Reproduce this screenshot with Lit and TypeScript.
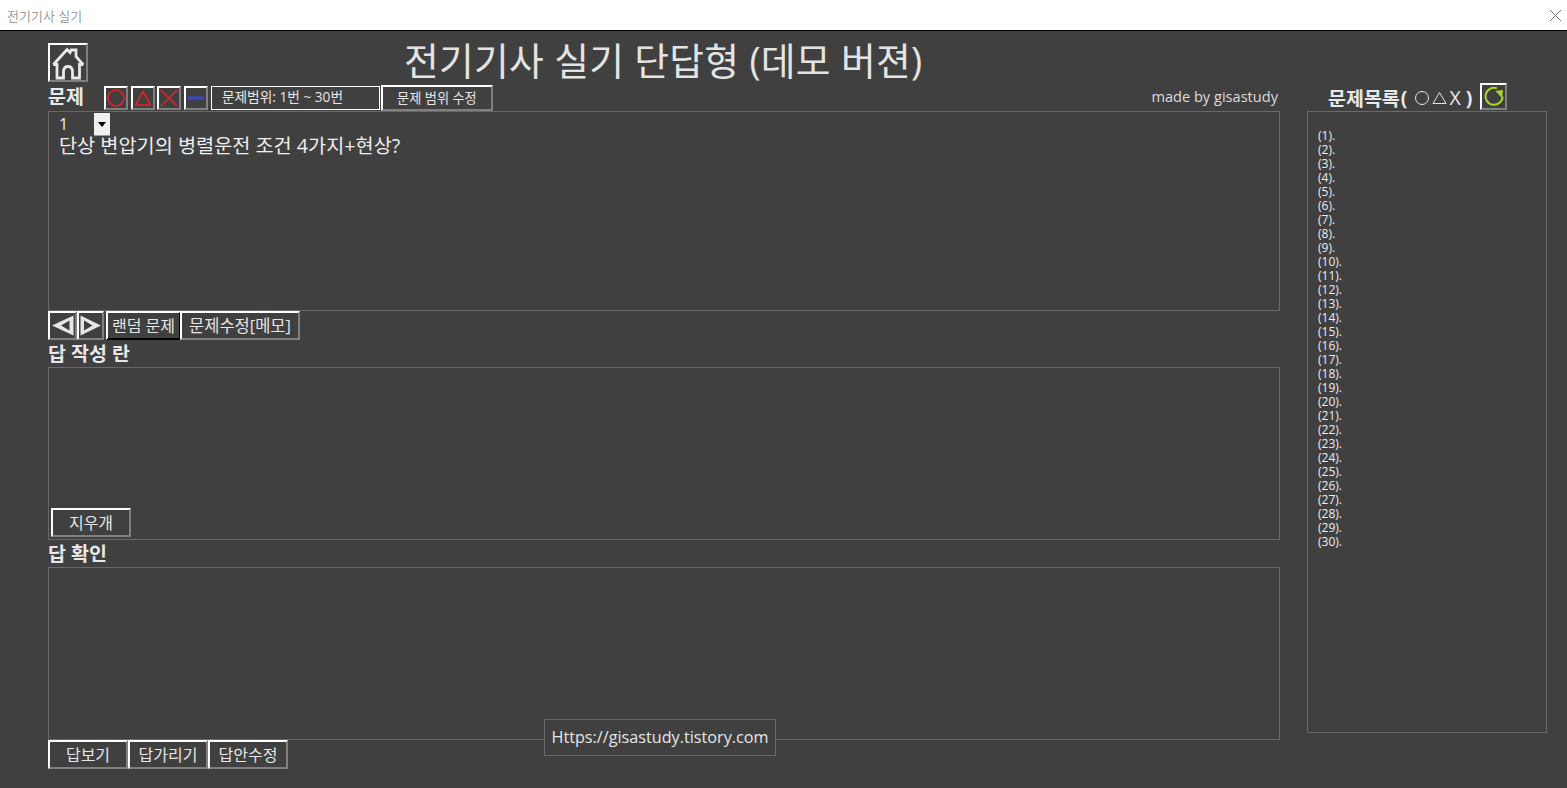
import { LitElement, html, css, svg } from "lit";
import { customElement } from "lit/decorators.js";

const rows = Array.from({ length: 30 }, (_, i) => i + 1);

@customElement("app-root")
export class AppRoot extends LitElement {
  static styles = css`
    :host {
      display: block;
      width: 1567px;
      height: 788px;
      overflow: hidden;
      position: relative;
      background: #404040;
      font-family: "Open Sans", "Noto Sans CJK KR", sans-serif;
      color: #eaeaea;
    }
    .titlebar {
      height: 30px;
      background: #fff;
      border-bottom: 1px solid #000;
      display: flex;
      align-items: center;
      justify-content: space-between;
      padding: 0 5px 0 7px;
      font-size: 13px;
      color: #a0a0a0;
    }
    .main {
      display: grid;
      grid-template-columns: 1232px 240px;
      grid-template-rows: 40px 28px 1fr;
      column-gap: 27px;
      padding: 12px 0 0 48px;
    }
    .top {
      grid-column: 1;
      grid-row: 1;
      display: flex;
      align-items: flex-start;
    }
    .title {
      font-size: 37.8px;
      line-height: 36px;
      margin: 0 0 0 316px;
      color: #e4e4e4;
      white-space: nowrap;
      letter-spacing: 0.25px;
    }
    .btn {
      box-sizing: border-box;
      display: flex;
      align-items: center;
      justify-content: center;
      flex: none;
      background: #404040;
      border: 2px solid;
      border-color: #fff #808080 #808080 #fff;
      white-space: nowrap;
      color: #e6e6e6;
      font-size: 16px;
      padding: 0 0 1px;
    }
    .home { width: 40px; height: 39px; padding: 0; }
    .left { grid-column: 1; grid-row: 2 / 4; }
    .head {
      height: 28px;
      display: flex;
      align-items: center;
    }
    .label {
      font-size: 19.5px;
      font-weight: 700;
      line-height: 26px;
      height: 26px;
      white-space: nowrap;
      color: #e8e8e8;
    }
    .syms { display: flex; gap: 3px; margin-left: 20px; margin-top: 2px; }
    .sym { width: 24px; height: 24px; padding: 0; }
    .sym.nudge { margin-left: -1px; }
    .range {
      box-sizing: border-box;
      width: 169px;
      height: 24px;
      margin: 2px 0 0 3px;
      border: 1px solid #fff;
      font-size: 13.7px;
      line-height: 20px;
      padding-left: 10px;
      color: #e6e6e6;
      white-space: nowrap;
    }
    .rangebtn { width: 112px; height: 26px; margin: 2px 0 0 1px; font-size: 13.2px; }
    .made {
      margin-left: auto;
      margin-right: 2px;
      font-size: 14.6px;
      color: #dcdcdc;
      margin-top: -3px;
      white-space: nowrap;
    }
    .box {
      box-sizing: border-box;
      border: 1px solid #696969;
      position: relative;
    }
    .q { height: 200px; padding: 1px 0 0 11px; }
    .sel { display: flex; height: 23px; }
    .sel span { width: 34px; font-size: 16px; line-height: 23px; color: #eee; margin-left: -1px; }
    .arrow {
      box-sizing: border-box;
      width: 16px;
      height: 23px;
      margin-left: 1px;
      background: #f0f0f0;
      border-bottom: 1px solid #999;
      display: flex;
      align-items: center;
      justify-content: center;
    }
    .qtext {
      font-size: 19.7px;
      line-height: 20px;
      color: #eee;
      white-space: nowrap;
      margin-left: -1px;
    }
    .tools { height: 30px; display: flex; }
    .nav { width: 29px; height: 29px; padding: 0; }
    .nav + .nav { margin-left: 0; margin-right: 2px; width: 27px; }
    .tbtn { height: 29px; font-size: 16px; }
    .tbtn.rand {
      width: 75px;
      border-color: #fff #000 #000 #fff;
    }
    .tbtn.edit { width: 120px; margin-left: -1px; font-size: 16.5px; }
    .subhead { height: 26px; display: flex; align-items: flex-end; }
    .a { height: 173px; display: flex; align-items: flex-end; padding: 0 0 2px 2px; }
    .erase { width: 80px; height: 29px; font-size: 16px; }
    .subhead.two { height: 27px; }
    .c { height: 173px; }
    .bottom { display: flex; height: 30px; }
    .bbtn { width: 80px; height: 29px; font-size: 16px; }
    .right { grid-column: 2; grid-row: 2 / 4; }
    .rhead { height: 28px; display: flex; align-items: center; padding-left: 21px; }
    .rtitle { width: 145px; display: flex; align-items: center; font-size: 19.5px; font-weight: 700; white-space: nowrap; color: #e8e8e8; margin-top: 1px; }
    .rtitle .thin { font-weight: 400; margin-left: 7px; display: flex; align-items: center; gap: 2px; }
    .rtitle .thin svg { display: block; margin-top: 1px; }
    .rtitle .p { margin-left: 1px; }
    .rtitle .p.end { margin-left: 5px; }
    .refresh { width: 27px; height: 27px; margin-left: 7px; margin-top: -1px; padding: 0; }
    .list {
      height: 622px;
      padding: 17px 0 0 10px;
      font-size: 12px;
      line-height: 14px;
      color: #eee;
    }
    .badge {
      position: absolute;
      left: 544px;
      top: 719px;
      box-sizing: border-box;
      width: 232px;
      height: 37px;
      border: 1px solid #696969;
      background: #404040;
      display: flex;
      align-items: center;
      justify-content: center;
      padding-bottom: 2px;
      font-size: 16.2px;
      color: #e6e6e6;
      white-space: nowrap;
    }
  `;

  private sym(shape: unknown, cls = "") {
    return html`<div class="btn sym ${cls}">
      <svg width="20" height="20" viewBox="0 0 20 20" fill="none" stroke-width="1.6">${shape}</svg>
    </div>`;
  }

  render() {
    return html`
      <div class="titlebar">
        <span>전기기사 실기</span>
        <svg width="13" height="13" viewBox="0 0 13 13" stroke="#777" stroke-width="1" fill="none">
          <path d="M1 1 L12 12 M12 1 L1 12" />
        </svg>
      </div>
      <div class="main">
        <div class="top">
          <div class="btn home">
            <svg width="34" height="34" viewBox="0 0 34 34" fill="none" stroke="#e8e8e8" stroke-width="2.8" stroke-linejoin="miter" stroke-miterlimit="2">
              <path d="M2.5 18.5 L16 3.5 L19 6.5 L20 4 L25 4 L25 10.5 L32 18.5 L28.5 18.5 L28.5 32 L21.5 32 L21.5 25 Q21 20.5 17 20.5 Q13 20.5 12.5 25 L12.5 32 L6 32 L6 18.5 Z" />
            </svg>
          </div>
          <div class="title">전기기사 실기 단답형 (데모 버젼)</div>
        </div>
        <div class="left">
          <div class="head">
            <div class="label">문제</div>
            <div class="syms">
              ${this.sym(svg`<circle cx="10" cy="10" r="8" stroke="#e0202c" />`)}
              ${this.sym(svg`<path d="M10 3.5 L17.5 17 L2.5 17 Z" stroke="#e0202c" />`)}
              ${this.sym(svg`<path d="M2 2 L18 18 M18 2 L2 18" stroke="#e0202c" />`, "nudge")}
              ${this.sym(svg`<path d="M2 10 L18 10" stroke="#3c46c8" stroke-width="3" />`)}
            </div>
            <div class="range">문제범위: 1번 ~ 30번</div>
            <div class="btn rangebtn">문제 범위 수정</div>
            <div class="made">made by gisastudy</div>
          </div>
          <div class="box q">
            <div class="sel">
              <span>1</span>
              <div class="arrow">
                <svg width="8" height="5" viewBox="0 0 8 5"><path d="M0 0 H8 L4 5 Z" fill="#000" /></svg>
              </div>
            </div>
            <div class="qtext">단상 변압기의 병렬운전 조건 4가지+현상?</div>
          </div>
          <div class="tools">
            <div class="btn nav">
              <svg width="25" height="25" viewBox="0 0 25 25"><path d="M2 12.5 L23.5 2.5 V22.5 Z M11 12.5 L19.5 17.5 V7.5 Z" fill="#e6e6e6" fill-rule="evenodd" /></svg>
            </div>
            <div class="btn nav">
              <svg width="23" height="25" viewBox="0 0 23 25"><path d="M22 12.5 L1.5 2.5 V22.5 Z M13.5 12.5 L5 7.5 V17.5 Z" fill="#e6e6e6" fill-rule="evenodd" /></svg>
            </div>
            <div class="btn tbtn rand">랜덤 문제</div>
            <div class="btn tbtn edit">문제수정[메모]</div>
          </div>
          <div class="subhead"><div class="label">답 작성 란</div></div>
          <div class="box a"><div class="btn erase">지우개</div></div>
          <div class="subhead two"><div class="label">답 확인</div></div>
          <div class="box c"></div>
          <div class="bottom">
            <div class="btn bbtn">답보기</div>
            <div class="btn bbtn">답가리기</div>
            <div class="btn bbtn">답안수정</div>
          </div>
        </div>
        <div class="right">
          <div class="rhead">
            <div class="rtitle">문제목록<span class="p">(</span>
              <span class="thin">
                <svg width="16" height="16" viewBox="0 0 16 16" fill="none" stroke="#e6e6e6"><circle cx="8" cy="8" r="6.5" /></svg>
                <svg width="15" height="14" viewBox="0 0 15 14" fill="none" stroke="#e6e6e6"><path d="M7.5 1.5 L14 12.5 H1 Z" /></svg>
                <span>X</span>
              </span>
              <span class="p end">)</span>
            </div>
            <div class="btn refresh">
              <svg width="23" height="23" viewBox="0 0 23 23" fill="none" stroke="#a8d820" stroke-width="2">
                <path d="M15 3.4 A8.5 8.5 0 1 0 20.5 11.5" />
                <path d="M13.5 6 L21 5 L20 13 Z" fill="#a8d820" stroke="none" />
              </svg>
            </div>
          </div>
          <div class="box list">
            ${rows.map((n) => html`<div>(${n}).</div>`)}
          </div>
        </div>
      </div>
      <div class="badge">Https://gisastudy.tistory.com</div>
    `;
  }
}
